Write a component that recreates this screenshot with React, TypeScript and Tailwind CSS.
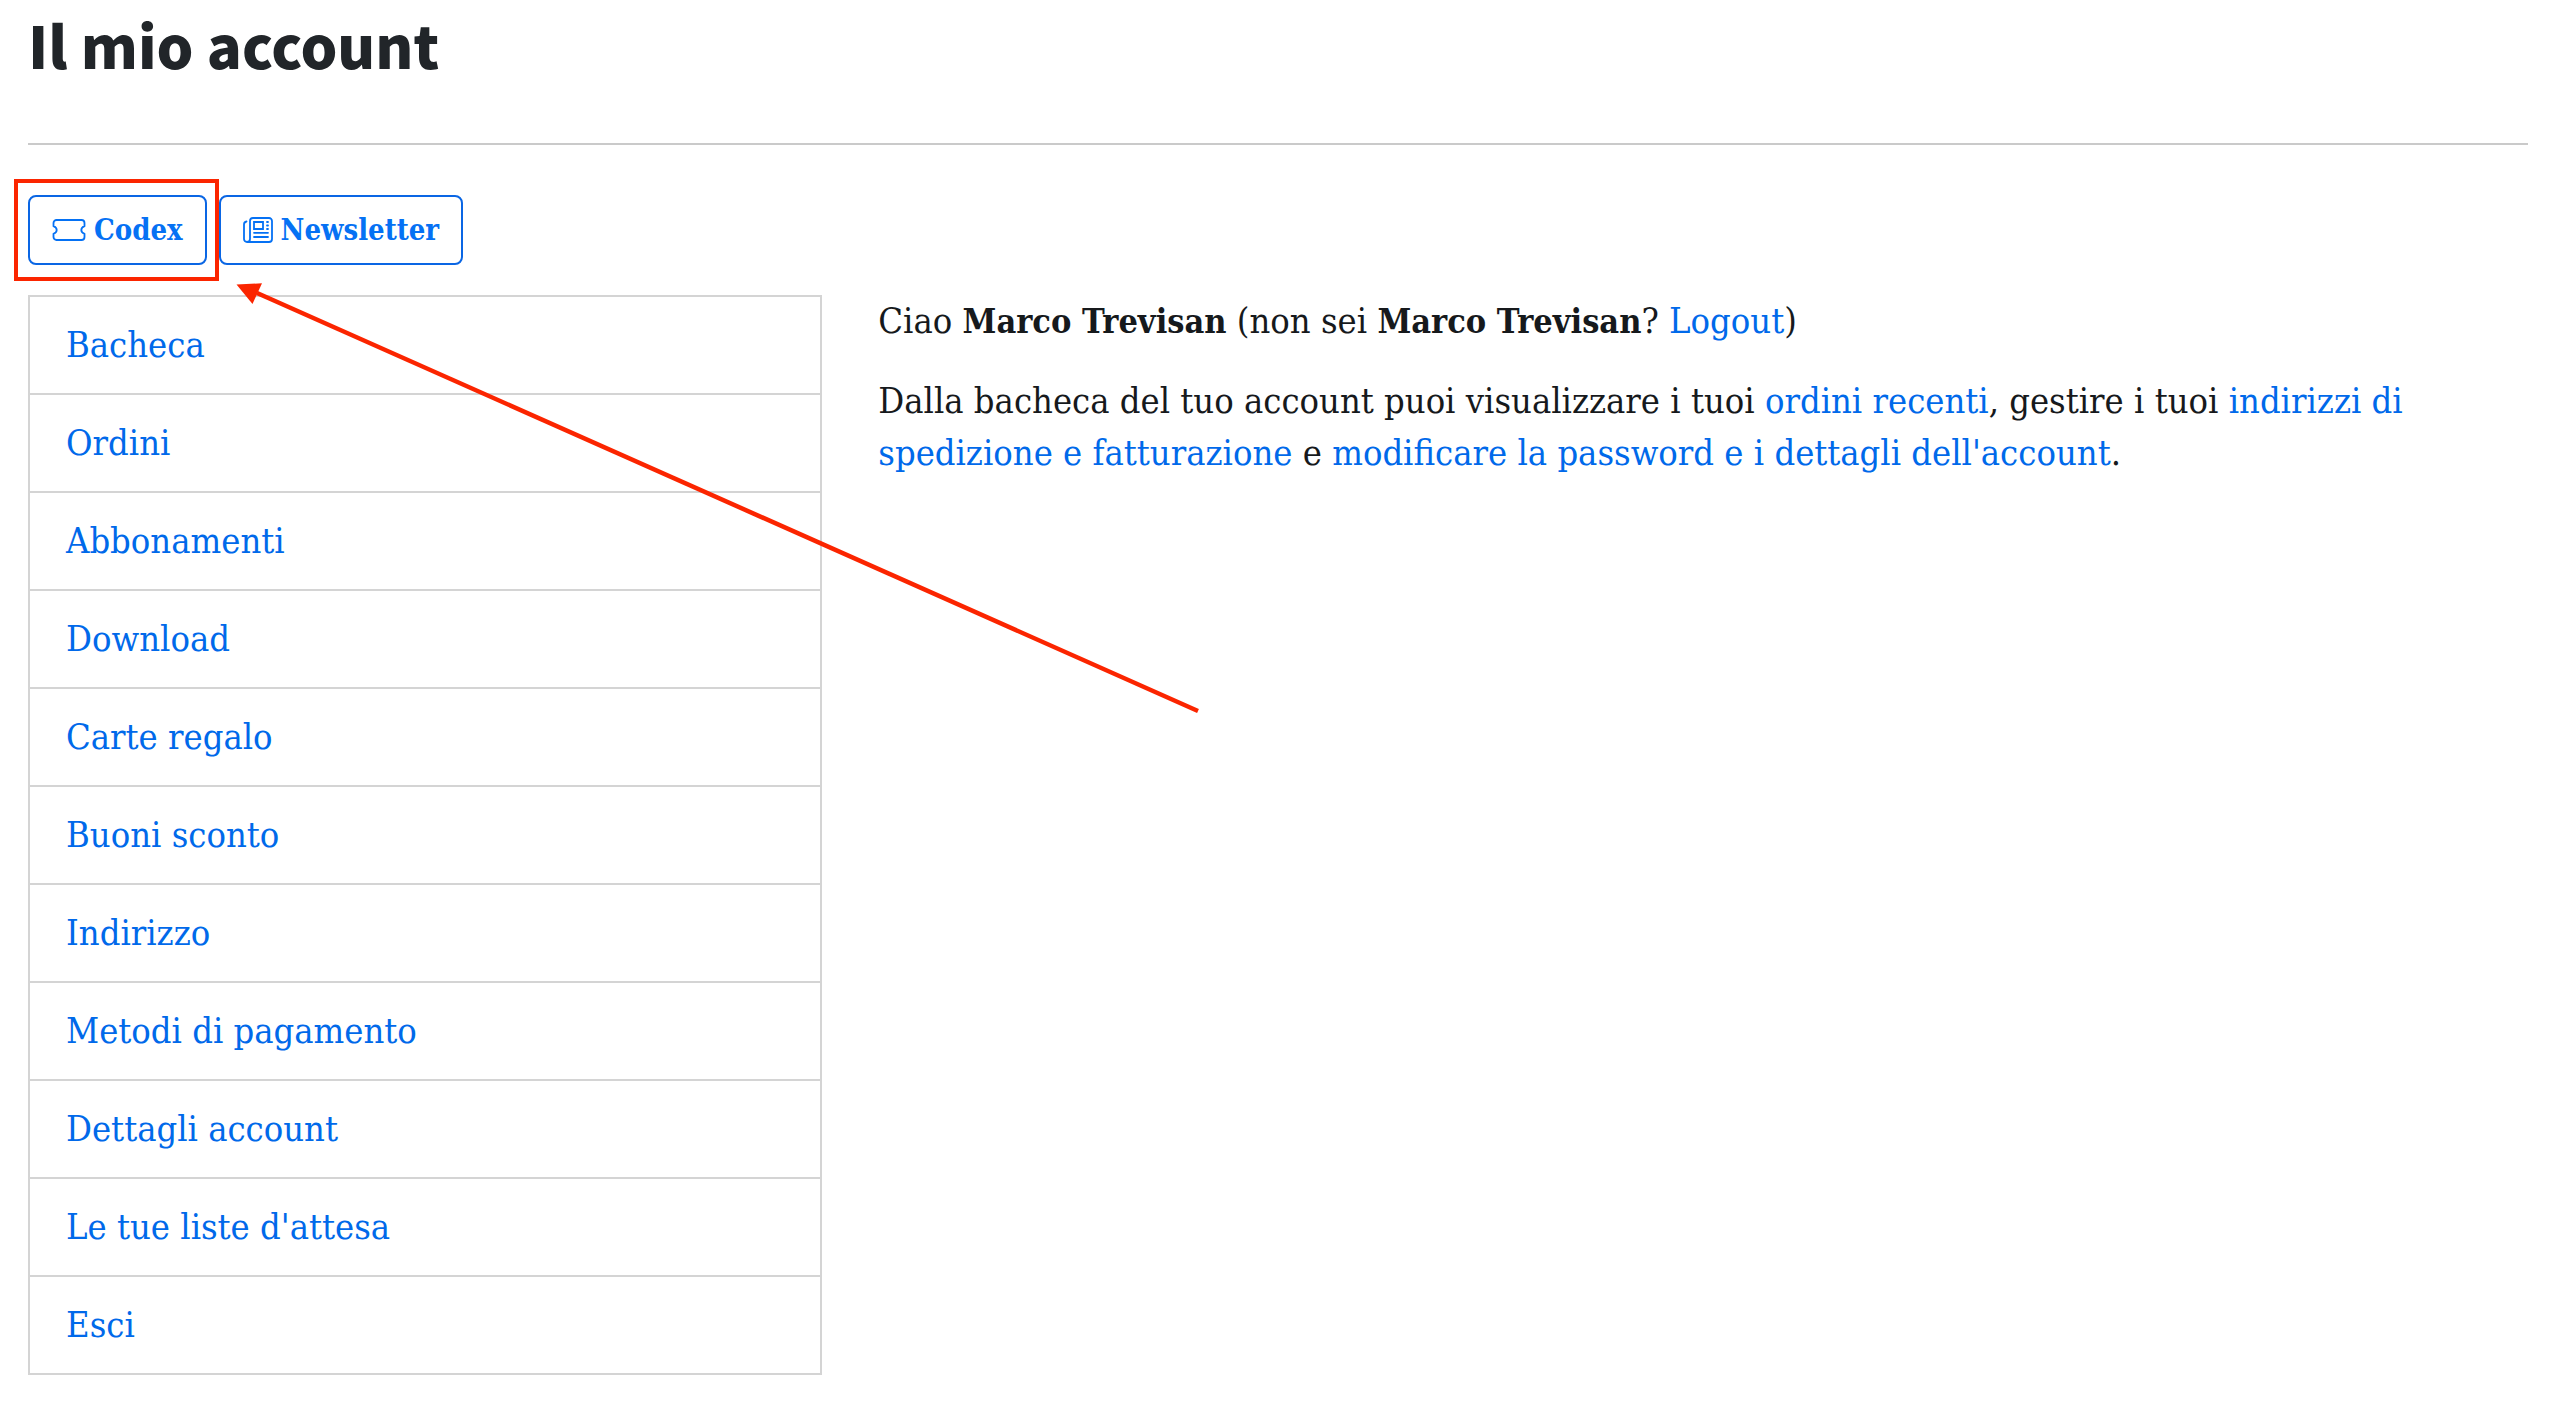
import type { ReactNode } from "react";

const menuItems = [
  { label: "Bacheca", href: "#bacheca" },
  { label: "Ordini", href: "#ordini" },
  { label: "Abbonamenti", href: "#abbonamenti" },
  { label: "Download", href: "#download" },
  { label: "Carte regalo", href: "#carte-regalo" },
  { label: "Buoni sconto", href: "#buoni-sconto" },
  { label: "Indirizzo", href: "#indirizzo" },
  { label: "Metodi di pagamento", href: "#metodi-di-pagamento" },
  { label: "Dettagli account", href: "#dettagli-account" },
  { label: "Le tue liste d'attesa", href: "#liste-attesa" },
  { label: "Esci", href: "#esci" },
];

function TicketIcon() {
  return (
    <svg className="w-[34px] h-[26px]" viewBox="0 0 34 26" fill="none" stroke="currentColor" strokeWidth="1.8" strokeLinejoin="round" aria-hidden="true">
      <path d="M4.500 3h25a3 3 0 0 1 3 3v3.200c-2 .8-3.200 2-3.200 3.800s1.200 3 3.200 3.800V20a3 3 0 0 1-3 3h-25a3 3 0 0 1-3-3v-3.200c2-.8 3.200-2 3.200-3.800s-1.200-3-3.200-3.800V6a3 3 0 0 1 3-3z" />
    </svg>
  );
}

function NewspaperIcon() {
  return (
    <svg className="w-[30px] h-[26px]" viewBox="0 0 30 26" fill="none" stroke="currentColor" strokeWidth="1.8" strokeLinecap="round" aria-hidden="true">
      <path d="M4 25h22a3 3 0 0 0 3-3V4a3 3 0 0 0-3-3H10a3 3 0 0 0-3 3v18a3 3 0 0 1-6 0V7.500a3 3 0 0 1 2.500-3" />
      <path d="M11 5h9v7h-9zM24 5h1M24 8.500h1M24 12h1M11 15.800h14M11 20h14" />
    </svg>
  );
}

function ActionButton({ icon, children }: { icon: ReactNode; children: ReactNode }) {
  return (
    <button
      type="button"
      className="flex h-[70px] items-center gap-2 rounded-lg border-2 border-[#0a66e4] px-[22px] text-[29px] font-bold leading-none text-[#0571f4]"
    >
      {icon}
      {children}
    </button>
  );
}

function TextLink({ href, children }: { href: string; children: ReactNode }) {
  return (
    <a href={href} className="text-[#0069ea]">
      {children}
    </a>
  );
}

function UserName() {
  return <strong className="text-[34px]">Marco Trevisan</strong>;
}

export default function App() {
  return (
    <main className="relative min-h-screen bg-white pl-7 pr-8 pb-7 font-['DejaVu_Serif_Condensed','DejaVu_Serif',serif] text-[36px] leading-[52px] text-[#16191c]">
      <h1 className="pt-2 font-['Noto_Sans_CJK_JP',sans-serif] text-[58px] font-black leading-[72px] text-[#212529]">
        Il mio account
      </h1>
      <hr className="mt-[63px] border-t-2 border-[#cacaca]" />

      <div className="mt-[50px] flex gap-3">
        <div className="relative">
          <ActionButton icon={<TicketIcon />}>Codex</ActionButton>
          {/* Highlight around the Codex button */}
          <div className="pointer-events-none absolute -left-[14px] -right-3 -top-4 -bottom-4 z-10 border-4 border-[#fb2500]" />
        </div>
        <ActionButton icon={<NewspaperIcon />}>Newsletter</ActionButton>
      </div>

      <div className="mt-[30px] grid grid-cols-[13fr_27fr] items-start gap-14">
        <nav aria-label="Account" className="border-2 border-[#d4d4d4]">
          <ul className="divide-y-2 divide-[#d4d4d4]">
            {menuItems.map((item) => (
              <li key={item.label}>
                <a href={item.href} className="block px-9 py-[22px] text-[#0069ea]">
                  {item.label}
                </a>
              </li>
            ))}
          </ul>
        </nav>

        <section className="space-y-7">
          <p>
            Ciao <UserName /> (non sei <UserName />? <TextLink href="#logout">Logout</TextLink>)
          </p>
          <p>
            Dalla bacheca del tuo account puoi visualizzare i tuoi{" "}
            <TextLink href="#ordini">ordini recenti</TextLink>, gestire i tuoi{" "}
            <TextLink href="#indirizzo">indirizzi di spedizione e fatturazione</TextLink> e{" "}
            <TextLink href="#dettagli-account">modificare la password e i dettagli dell'account</TextLink>.
          </p>
        </section>
      </div>

      {/* Arrow pointing at the Codex button */}
      <svg className="pointer-events-none absolute left-[236px] top-[282px]" width="966" height="434" viewBox="236 282 966 434" fill="#fb2500" aria-hidden="true">
        <path d="M257 293L1198 711" stroke="#fb2500" strokeWidth="4.500" />
        <path d="M236.500 284.500L262 283.300L252.500 304z" />
      </svg>
    </main>
  );
}
